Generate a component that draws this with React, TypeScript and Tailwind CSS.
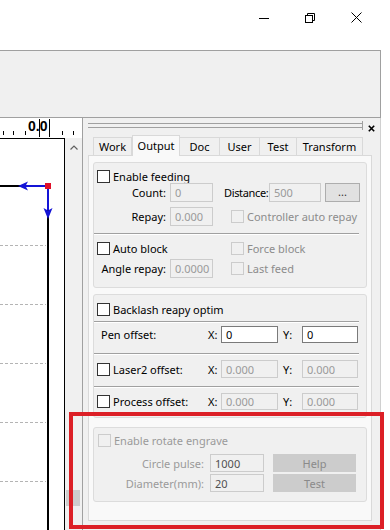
import React from "react";

function Check({ disabled = false }: { disabled?: boolean }) {
  return (
    <span
      className={`inline-block shrink-0 w-[13px] h-[13px] border ${
        disabled ? "border-[#cccccc] bg-[#f0f0f0]" : "border-[#333333] bg-white"
      }`}
    />
  );
}

function Field({
  w,
  h,
  text,
  enabled = false,
  dark = false,
}: {
  w: string;
  h: string;
  text: string;
  enabled?: boolean;
  dark?: boolean;
}) {
  return (
    <div
      className={`${w} ${h} shrink-0 flex items-center pl-[4px] border ${
        enabled
          ? "border-[#7a7a7a] bg-white text-black"
          : dark
          ? "border-[#cccccc] bg-[#f0f0f0] text-[#505050]"
          : "border-[#cccccc] bg-[#f0f0f0] text-[#9a9a9a]"
      }`}
    >
      {text}
    </div>
  );
}

function Sep() {
  return <div className="h-[2px] w-[265px] border-t border-[#a0a0a0] border-b border-b-white" />;
}

function OffsetRow({
  label,
  check,
  value,
  enabled,
  h,
}: {
  label: string;
  check?: boolean;
  value: string;
  enabled?: boolean;
  h: string;
}) {
  return (
    <div className={`flex items-center ${h}`}>
      <div className={`w-[114px] flex items-center ${check ? "pl-[3px] gap-[3px]" : "pl-[7px]"}`}>
        {check && <Check />}
        <span>{label}</span>
      </div>
      <span className="w-[13px]">X:</span>
      <Field w="w-[57px]" h={h} text={value} enabled={enabled} />
      <span className="w-[24px] pl-[5px]">Y:</span>
      <Field w="w-[56px]" h={h} text={value} enabled={enabled} />
    </div>
  );
}

export default function App() {
  const tabs = [
    { t: "Work", w: "w-[39px]" },
    { t: "Output", w: "w-[48px]", active: true },
    { t: "Doc", w: "w-[40px]" },
    { t: "User", w: "w-[40px]" },
    { t: "Test", w: "w-[37px]" },
    { t: "Transform", w: "w-[66px]" },
  ];
  const dashes = [106, 165, 224, 283, 342];
  return (
    <div className="relative w-[390px] h-[530px] overflow-hidden bg-white font-['Noto_Sans',sans-serif] text-[11px] text-black leading-none">
      {/* caption bar */}
      <div className="h-[50px] flex justify-end items-start pr-[11px]">
        <div className="w-[46px] h-[35px] flex items-center justify-center">
          <svg width="10" height="10" viewBox="0 0 10 10">
            <rect x="0" y="5" width="10" height="1" fill="#000" />
          </svg>
        </div>
        <div className="w-[46px] h-[35px] flex items-center justify-center">
          <svg width="10" height="10" viewBox="0 0 10 10" fill="none" stroke="#000" strokeWidth="1">
            <path d="M2.5 2.5V0.5H9.5V7.5H7.5" />
            <rect x="0.5" y="2.5" width="7" height="7" />
          </svg>
        </div>
        <div className="w-[46px] h-[35px] flex items-center justify-center">
          <svg width="11" height="11" viewBox="0 0 11 11" fill="none" stroke="#000" strokeWidth="1">
            <path d="M0.5 0.5L10.5 10.5M10.5 0.5L0.5 10.5" />
          </svg>
        </div>
      </div>

      {/* toolbar */}
      <div className="w-[381px] h-[68px] border-y border-r border-[#a0a0a0] bg-[#f0f0f0]" />

      {/* main area */}
      <div className="flex h-[412px]">
        {/* left canvas column */}
        <div className="w-[83px] flex flex-col border-r border-[#a0a0a0]">
          <div className="h-[20px] bg-white">
            <svg width="82" height="20" viewBox="0 0 82 20" className="block">
              {[3, 13, 25, 62, 73].map((x) => (
                <rect key={x} x={x} y="13" width="1" height="4" fill="#000" />
              ))}
              <rect x="39" y="1" width="1" height="18" fill="#000" />
              <rect x="49" y="1" width="1" height="18" fill="#000" />
              <text x="28" y="13" fontFamily="Liberation Sans, Arial, sans-serif" fontWeight="bold" fontSize="14" fill="#000">
                0.0
              </text>
            </svg>
          </div>
          <div className="flex flex-1 min-h-0">
            <div className="w-[65px] border-t border-r border-black bg-white">
              <svg width="64" height="391" viewBox="0 0 64 391" className="block">
                {dashes.map((y) => (
                  <line key={y} x1="0" y1={y + 0.5} x2="46" y2={y + 0.5} stroke="#b4b4b4" strokeWidth="1" strokeDasharray="3 2" />
                ))}
                <rect x="0" y="46" width="47" height="2" fill="#000" />
                <rect x="47" y="46" width="2" height="345" fill="#000" />
                <rect x="24" y="46" width="23" height="2" fill="#1414d6" />
                <polygon points="18,47 28,42.5 25.5,47 28,51.5" fill="#1414d6" />
                <rect x="47" y="49" width="2" height="22" fill="#1414d6" />
                <polygon points="48,80 43.5,69 48,71.5 52.5,69" fill="#1414d6" />
                <rect x="45" y="44" width="6" height="6" fill="#e0102a" />
              </svg>
            </div>
            <div className="w-[17px] flex flex-col bg-[#f0f0f0]">
              <div className="h-[18px] flex items-center justify-center">
                <svg width="8" height="5" viewBox="0 0 8 5" fill="none" stroke="#606060" strokeWidth="1.2">
                  <path d="M0.5 4.5L4 1L7.5 4.5" />
                </svg>
              </div>
              <div className="flex-1" />
              <div className="ml-[1px] w-[14px] h-[16px] mb-[24px] bg-[#cdcdcd]" />
            </div>
          </div>
        </div>

        {/* dock panel */}
        <div className="w-[298px] flex flex-col bg-[#f0f0f0] border-r border-[#d0d0d0]">
          {/* grip row */}
          <div className="h-[17px] flex items-start pl-[5px] pt-[3px]">
            <div className="mt-[2px] w-[274px] h-[5px] border-y border-[#a0a0a0]" />
            <div className="w-px h-[9px] bg-[#a0a0a0]" />
            <div className="ml-[5px] mt-[4px]">
              <svg width="7" height="7" viewBox="0 0 7 7" fill="none" stroke="#000" strokeWidth="1.6">
                <path d="M0.8 0.8L6.2 6.2M6.2 0.8L0.8 6.2" />
              </svg>
            </div>
          </div>
          {/* tabs */}
          <div className="h-[20px] flex items-end pl-[10px]">
            {tabs.map((t) =>
              t.active ? (
                <div
                  key={t.t}
                  className={`${t.w} h-[21px] -mb-px relative z-10 flex items-center justify-center pb-[2px] bg-[#f9f9f9] border-x border-t border-[#d9d9d9] text-[11px]`}
                >
                  {t.t}
                </div>
              ) : (
                <div
                  key={t.t}
                  className={`${t.w} h-[18px] flex items-center justify-center bg-[#f0f0f0] border-t border-r border-[#d9d9d9] first:border-l text-[11px]`}
                >
                  {t.t}
                </div>
              )
            )}
          </div>
          {/* tab page */}
          <div className="ml-[5px] w-[284px] h-[366px] border border-[#d9d9d9] bg-[#f9f9f9] pt-[6px] pl-[4px]">
            {/* group 1 */}
            <div className="w-[274px] h-[126px] border border-[#dcdcdc] rounded-[3px] bg-[#f0f0f0] pt-[6px]">
              <div className="h-[14px] flex items-center gap-[3px] pl-[3px]">
                <Check />
                <span>Enable feeding</span>
              </div>
              <div className="h-[19px] flex items-center">
                <span className="w-[72px] text-right">Count:</span>
                <div className="ml-[4px]">
                  <Field w="w-[43px]" h="h-[19px]" text="0" />
                </div>
                <span className="ml-[11px] w-[45px] whitespace-nowrap tracking-[-0.35px]">Distance:</span>
                <Field w="w-[52px]" h="h-[19px]" text="500" />
                <div className="ml-[4px] w-[35px] h-[19px] flex items-center justify-center border border-[#adadad] bg-[#e1e1e1] text-[#333] pb-[3px]">
                  ...
                </div>
              </div>
              <div className="mt-[5px] h-[19px] flex items-center">
                <span className="w-[72px] text-right">Repay:</span>
                <div className="ml-[4px]">
                  <Field w="w-[43px]" h="h-[19px]" text="0.000" />
                </div>
                <div className="ml-[18px] flex items-center gap-[3px] text-[#8c8c8c]">
                  <Check disabled />
                  <span>Controller auto repay</span>
                </div>
              </div>
              <div className="mt-[7px]">
                <Sep />
              </div>
              <div className="mt-[6px] h-[14px] flex items-center">
                <div className="w-[137px] flex items-center gap-[3px] pl-[3px]">
                  <Check />
                  <span>Auto block</span>
                </div>
                <div className="flex items-center gap-[3px] text-[#8c8c8c]">
                  <Check disabled />
                  <span>Force block</span>
                </div>
              </div>
              <div className="mt-[4px] h-[19px] flex items-center">
                <span className="w-[72px] text-right">Angle repay:</span>
                <div className="ml-[4px]">
                  <Field w="w-[43px]" h="h-[19px]" text="0.0000" />
                </div>
                <div className="ml-[18px] flex items-center gap-[3px] text-[#8c8c8c]">
                  <Check disabled />
                  <span>Last feed</span>
                </div>
              </div>
            </div>

            {/* group 2 */}
            <div className="mt-[6px] w-[274px] h-[124px] border border-[#dcdcdc] rounded-[3px] bg-[#f0f0f0] pt-[7px]">
              <div className="h-[14px] flex items-center gap-[3px] pl-[3px]">
                <Check />
                <span>Backlash reapy optim</span>
              </div>
              <div className="mt-[5px]">
                <Sep />
              </div>
              <div className="mt-[3px]">
                <OffsetRow label="Pen offset:" value="0" enabled h="h-[17px]" />
              </div>
              <div className="mt-[10px]">
                <Sep />
              </div>
              <div className="mt-[5px]">
                <OffsetRow label="Laser2 offset:" check value="0.000" h="h-[18px]" />
              </div>
              <div className="mt-[8px]">
                <Sep />
              </div>
              <div className="mt-[5px]">
                <OffsetRow label="Process offset:" check value="0.000" h="h-[17px]" />
              </div>
            </div>

            {/* group 3 */}
            <div className="mt-[9px] w-[274px] h-[75px] border border-[#dcdcdc] rounded-[3px] bg-[#f0f0f0] pt-[6px] text-[#9a9a9a]">
              <div className="h-[13px] flex items-center gap-[3px] pl-[4px]">
                <Check disabled />
                <span>Enable rotate engrave</span>
              </div>
              <div className="mt-[7px] h-[18px] flex items-center">
                <span className="w-[110px] text-right">Circle pulse:</span>
                <div className="ml-[6px]">
                  <Field w="w-[54px]" h="h-[18px]" text="1000" dark />
                </div>
                <div className="ml-[9px] w-[83px] h-[18px] flex items-center justify-center bg-[#cccccc] text-[#8a8a8a]">
                  Help
                </div>
              </div>
              <div className="mt-[2px] h-[18px] flex items-center">
                <span className="w-[110px] text-right">Diameter(mm):</span>
                <div className="ml-[6px]">
                  <Field w="w-[54px]" h="h-[18px]" text="20" dark />
                </div>
                <div className="ml-[9px] w-[83px] h-[18px] flex items-center justify-center bg-[#cccccc] text-[#8a8a8a]">
                  Test
                </div>
              </div>
            </div>
          </div>
        </div>
      </div>

      {/* red annotation box */}
      <div className="absolute left-[69px] top-[412px] w-[315px] h-[117px] border-4 border-[#dc1f26]" />
    </div>
  );
}
